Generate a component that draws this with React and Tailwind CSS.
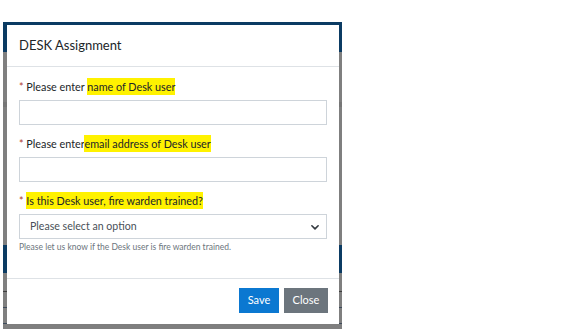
const FONT = { fontFamily: 'Lato, "Noto Sans", sans-serif' }

function Label({ pre, hl, after }) {
  return (
    <p className="text-[10.8px] leading-[18px] text-[#212529]">
      <span className="text-[#b03a2e]">*</span>
      {pre}
      <span className="bg-[#fff200] py-[2px]">{hl}</span>
      {after}
    </p>
  )
}

export default function App() {
  return (
    <div className="w-[561px] h-[334px] bg-white overflow-hidden" style={FONT}>
      <div className="relative ml-[3px] mt-[22px] w-[339px] h-[307px]">
        {/* page behind the backdrop */}
        <div className="flex flex-col h-full bg-[#7f7f7f]">
          <div className="h-[30px] bg-[#0b3b63]" />
          <div className="h-[50px]" />
          <div className="h-[5px] bg-[#767676]" />
          <div className="h-[138px]" />
          <div className="h-[28px] bg-[#0b3b63]" />
          <div className="h-[18px]" />
          <div className="h-px bg-[#3d3d3d]" />
          <div className="h-[15px]" />
          <div className="h-px bg-[#3d4a5a]" />
          <div className="h-[15px]" />
          <div className="h-px bg-[#3d4a5a]" />
          <div className="flex-1" />
        </div>

        {/* modal */}
        <div className="absolute left-[4px] top-[3px] w-[332px] h-[299px] bg-white flex flex-col">
          <div className="h-[42px] flex items-center px-3 border-b border-[#dee2e6]">
            <h2 className="text-[13px] text-[#212529]">DESK Assignment</h2>
          </div>

          <div className="px-3 pt-[11px] flex-1">
            <Label pre=" Please enter " hl="name of Desk user" />
            <input className="block w-full h-[25px] mt-[4px] border border-[#ced4da] bg-white" />

            <div className="mt-[10px]">
              <Label pre=" Please enter" hl="email address of Desk user" />
            </div>
            <input className="block w-full h-[25px] mt-[4px] border border-[#ced4da] bg-white" />

            <div className="mt-[10px]">
              <Label pre=" " hl="Is this Desk user, fire warden trained?" />
            </div>
            <div className="mt-[4px] h-[25px] border border-[#ced4da] flex items-center justify-between pl-[10px] pr-[6px]">
              <span className="text-[10.6px] text-[#495057]">Please select an option</span>
              <svg width="10" height="10" viewBox="0 0 16 16" fill="none" stroke="#343a40" strokeWidth="2.6" strokeLinecap="round" strokeLinejoin="round">
                <path d="M3 6l5 5 5-5" />
              </svg>
            </div>
            <p className="mt-[2px] text-[8.5px] leading-[13px] text-[#6c757d]">
              Please let us know if the Desk user is fire warden trained.
            </p>
          </div>

          <div className="h-[46px] border-t border-[#dee2e6] flex items-start justify-end gap-[5px] pt-[9px] px-[11px]">
            <button className="h-[25px] w-[40px] bg-[#0b78d1] text-white text-[11px]">Save</button>
            <button className="h-[25px] w-[44px] bg-[#6c757d] text-white text-[11px]">Close</button>
          </div>
        </div>
      </div>
    </div>
  )
}
